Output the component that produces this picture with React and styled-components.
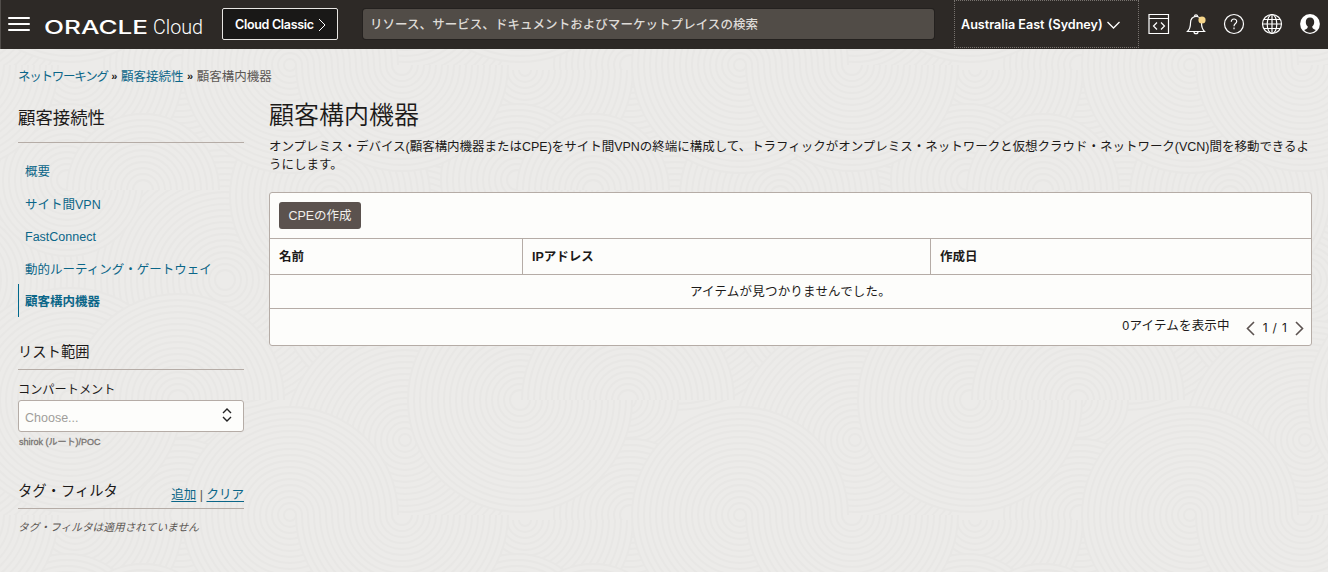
import React from 'react';
import styled, { createGlobalStyle, css } from 'styled-components';

const COLOR = {
  HEADER: '#2d2926',
  PAGE: '#ecebe9',
  RIPPLE: '#e8e7e5',
  TEXT: '#1c1a19',
  MUTED: '#5c5855',
  LINK: '#0b6688',
  LINE: '#b5aca6',
  PANEL: '#fdfdfb',
};

const FONT = {
  BASE: "'Liberation Sans', 'Noto Sans CJK JP', sans-serif",
  HEADER: "Inter, 'Noto Sans CJK JP', sans-serif",
};

const NAV_ITEMS = [
  '概要',
  'サイト間VPN',
  'FastConnect',
  '動的ルーティング・ゲートウェイ',
  '顧客構内機器',
];

const COLUMNS = ['名前', 'IPアドレス', '作成日'];

// discs overlap in this order, half discs join two centres into an S curve
const TILE = 450;
const DISCS = [
  { x: 225, y: 330, r: 130 },
  { x: 405, y: 330, r: 130 },
  { x: 330, y: 246, r: 100 },
  { x: 178, y: 0, r: 50 },
  { x: 405, y: 40, r: 120 },
  { x: 180, y: 115, r: 76 },
  { x: 75, y: 120, r: 108, half: 'bottom' },
  { x: 67, y: 230, r: 76 },
  { x: 143, y: 240, r: 76, half: 'top' },
  { x: 290, y: 115, r: 108 },
  { x: 402, y: 115, r: 106, half: 'bottom' },
  { x: 70, y: 0, r: 112 },
  { x: 178, y: 0, r: 106, half: 'top' },
];
const WRAPS = [-TILE, 0, TILE];
const RING_GAP = 6;

const ringPath = (x, y, r, half) => {
  const start = `M${x - r} ${y}`;
  const top = `a${r} ${r} 0 0 1 ${2 * r} 0`;
  const bottom = `a${r} ${r} 0 0 0 ${2 * r} 0`;

  if (half === 'top') return start + top;
  if (half === 'bottom') return start + bottom;
  return start + top + start + bottom;
};

const GlobalStyle = createGlobalStyle`
  * {
    box-sizing: border-box;
  }

  body {
    margin: 0;
    background: ${COLOR.PAGE};
  }
`;

const Page = styled.div`
  position: relative;
  height: 572px;
  overflow: hidden;
  font-family: ${FONT.BASE};
  font-size: 12.5px;
  line-height: 18px;
  color: ${COLOR.TEXT};
`;

const Backdrop = styled.svg`
  position: absolute;
  inset: 0;
  width: 100%;
  height: 100%;
`;

const Content = styled.div`
  position: relative;
`;

const HeaderBar = styled.header`
  display: flex;
  align-items: center;
  height: 49px;
  padding-left: 7px;
  border-left: 1px solid #514d4a;
  background: ${COLOR.HEADER};
  color: #fff;
  font-family: ${FONT.HEADER};
`;

const MenuButton = styled.div`
  display: flex;
  flex-direction: column;
  gap: 4px;
  width: 22px;
  margin-right: 15px;
  padding-bottom: 2px;

  span {
    height: 2px;
    border-radius: 1px;
    background: #fff;
  }
`;

const Logo = styled.svg`
  display: block;
  width: 162px;
  height: 48px;
  overflow: visible;
  fill: #fff;
`;

const ClassicButton = styled.div`
  display: flex;
  align-items: center;
  justify-content: space-between;
  width: 116px;
  height: 32px;
  margin: 0 25px 1px 15px;
  padding: 1px 11px 0 12px;
  border: 1px solid #e8e6e3;
  border-radius: 2px;
  background: #191817;
  font-size: 12.5px;
  font-weight: 600;
  letter-spacing: -0.3px;
  white-space: nowrap;
`;

const Search = styled.div`
  width: 571px;
  height: 30px;
  margin-bottom: 1px;
  padding: 1px 0 0 7px;
  border-radius: 3px;
  background: #514c47;
  box-shadow: 0 0 0 1px #24211f;
  color: #dedbd7;
  font-family: ${FONT.BASE};
  font-weight: 500;
  letter-spacing: 0.05px;
  line-height: 30px;
`;

const Region = styled.div`
  display: flex;
  align-items: center;
  gap: 4px;
  width: 185px;
  height: 48px;
  margin: 0 8.5px 1px 20px;
  padding: 1px 0 0 6px;
  border: 1px dotted #77726e;
  font-size: 12.6px;
  font-weight: 600;
  white-space: nowrap;
`;

const HeaderIcons = styled.div`
  display: flex;
  gap: 15.8px;
  padding-bottom: 2px;
`;

const Icon = styled.svg`
  display: block;
  flex: none;
  width: ${({ $w = 22 }) => $w}px;
  height: ${({ $h = 22 }) => $h}px;
  fill: none;
  stroke: ${({ $color = '#fff' }) => $color};
  stroke-width: ${({ $stroke = 1.2 }) => $stroke};
`;

const Breadcrumb = styled.nav`
  display: flex;
  gap: 3.6px;
  height: 18px;
  margin: 19px 0 0 18px;
  color: ${COLOR.MUTED};

  b {
    color: ${COLOR.TEXT};
    font-size: 11px;
    line-height: 17px;
  }
`;

const Crumb = styled.a`
  color: ${COLOR.LINK};
  letter-spacing: ${({ $tight }) => ($tight ? '-1.25px' : 'normal')};
`;

const Body = styled.div`
  display: flex;
  gap: 25px;
  padding: 0 16px 0 18px;
`;

const Sidebar = styled.aside`
  flex: none;
  width: 226px;
`;

const SideTitle = styled.h2`
  height: 57px;
  margin: 0;
  padding-top: 20px;
  border-bottom: 1px solid ${COLOR.LINE};
  font-size: 17.4px;
  font-weight: 400;
  line-height: 24px;
`;

const Nav = styled.nav`
  padding-top: 11px;
`;

const NavItem = styled.a`
  display: block;
  height: 32.5px;
  padding: 2px 0 0 6px;
  border-left: 1px solid transparent;
  color: ${COLOR.LINK};
  line-height: 33px;

  ${({ $active }) =>
    $active &&
    css`
      border-color: #00688c;
      font-weight: 700;
    `}
`;

const SectionTitle = styled.h3`
  display: flex;
  justify-content: space-between;
  height: 28px;
  margin: 0;
  border-bottom: 1px solid ${COLOR.LINE};
  font-size: 14.3px;
  font-weight: 400;
  line-height: 20px;
`;

const ListScope = styled.section`
  padding-top: 25px;
`;

const Label = styled.div`
  margin-top: 10px;
  font-size: 12.2px;
  line-height: 20px;
`;

const Select = styled.div`
  display: flex;
  align-items: center;
  justify-content: space-between;
  height: 32px;
  padding: 4px 11px 0 6px;
  border: 1px solid ${COLOR.LINE};
  border-radius: 3px;
  background: ${COLOR.PANEL};
  color: #a09d9a;

  svg {
    margin-bottom: 6px;
  }
`;

const Path = styled.div`
  padding: 1px 0 0 1px;
  color: #777370;
  font-size: 9px;
  line-height: 18px;
  -webkit-text-stroke: 0.3px #777370;
`;

const TagFilter = styled.section`
  padding-top: 30px;
`;

const TagLinks = styled.div`
  padding-top: 4px;
  color: ${COLOR.MUTED};
  font-size: 12.5px;

  a {
    color: ${COLOR.LINK};
    text-decoration: underline;
    text-underline-offset: 2px;
  }
`;

const TagNote = styled.div`
  padding-top: 9px;
  color: ${COLOR.MUTED};
  font-size: 10.7px;
  font-style: italic;
`;

const Main = styled.main`
  flex: 1;
`;

const Title = styled.h1`
  margin: 13px 0 7px;
  font-size: 25px;
  font-weight: 350;
  line-height: 32px;
`;

const Description = styled.p`
  height: 36px;
  margin: 0 0 18px;
  letter-spacing: -0.02px;
`;

const Panel = styled.div`
  border: 1px solid ${COLOR.LINE};
  border-radius: 3px;
  background: ${COLOR.PANEL};
`;

const Toolbar = styled.div`
  height: 46px;
  padding: 9px;
  border-bottom: 1px solid ${COLOR.LINE};
`;

const CreateButton = styled.button`
  display: block;
  width: 82px;
  height: 27px;
  padding: 0;
  border: 0;
  border-radius: 3px;
  background: #5b524e;
  color: #f1efec;
  font: inherit;
`;

const HeadRow = styled.div`
  display: grid;
  grid-template-columns: 253px 408px 1fr;
  height: 36px;
  border-bottom: 1px solid ${COLOR.LINE};
`;

const HeadCell = styled.div`
  height: 35px;
  padding: 1px 0 0 9px;
  border-right: 1px solid ${COLOR.LINE};
  font-weight: 700;
  line-height: 35px;

  &:last-child {
    border-right: 0;
  }
`;

const EmptyRow = styled.div`
  height: 34px;
  padding-top: 1px;
  border-bottom: 1px solid ${COLOR.LINE};
  letter-spacing: 0.2px;
  line-height: 33px;
  text-align: center;
`;

const Footer = styled.div`
  display: flex;
  justify-content: flex-end;
  height: 36px;
  padding-right: 7px;
  letter-spacing: 0.2px;
  line-height: 34px;
`;

const Pager = styled.div`
  display: flex;
  align-items: center;
  gap: 8px;
  margin-left: 16px;
  padding-top: 2px;
  font-family: ${FONT.HEADER};
  font-size: 12px;
  word-spacing: 1.2px;
`;

const Ripples = () => (
  <Backdrop aria-hidden="true">
    <defs>
      <pattern
        id="ripples"
        width={TILE}
        height={TILE}
        y="-50"
        patternUnits="userSpaceOnUse"
      >
        <rect width={TILE} height={TILE} fill={COLOR.PAGE} />
        {DISCS.map(({ x, y, r, half }, index) =>
          WRAPS.map((dx) =>
            WRAPS.map((dy) => (
              <g
                key={`${index}-${dx}-${dy}`}
                fill={COLOR.PAGE}
                stroke={COLOR.RIPPLE}
                strokeWidth="1.8"
              >
                {Array.from({ length: Math.floor(r / RING_GAP) }, (_, i) => (
                  <path
                    key={i}
                    d={ringPath(x + dx, y + dy, r - i * RING_GAP, half)}
                  />
                ))}
              </g>
            ))
          )
        )}
      </pattern>
    </defs>
    <rect width="100%" height="100%" fill="url(#ripples)" />
  </Backdrop>
);

const Header = () => (
  <HeaderBar>
    <MenuButton>
      <span />
      <span />
      <span />
    </MenuButton>
    <Logo viewBox="0 0 162 48">
      <text
        x="-1"
        y="32.8"
        fontFamily="Inter, sans-serif"
        fontSize="18.5"
        fontWeight="500"
        textLength="104"
        lengthAdjust="spacingAndGlyphs"
      >
        ORACLE
      </text>
      <text
        x="108"
        y="33"
        fontFamily="Roboto, sans-serif"
        fontSize="20"
        fontWeight="300"
        textLength="50"
        lengthAdjust="spacingAndGlyphs"
      >
        Cloud
      </text>
    </Logo>
    <ClassicButton>
      Cloud Classic
      <Icon viewBox="0 0 8 14" $w={8} $h={14} $stroke={1}>
        <path d="M1 1l6 6-6 6" />
      </Icon>
    </ClassicButton>
    <Search>リソース、サービス、ドキュメントおよびマーケットプレイスの検索</Search>
    <Region>
      Australia East (Sydney)
      <Icon viewBox="0 0 13 8" $w={13} $h={8} $stroke={1.3}>
        <path d="M.5 1l6 6 6-6" />
      </Icon>
    </Region>
    <HeaderIcons>
      <Icon viewBox="0 0 22 22">
        <path d="M1 1.5h19.5v19H1zM1 5.5h19.5" />
        <path d="M9 9.5l-3.5 3.5 3.5 3.5M13 9.5l3.5 3.5-3.5 3.5" />
      </Icon>
      <Icon viewBox="0 0 22 22">
        <path d="M2.500 18.500c2.500-2.500 3-4 3-8.500 0-4 2-6.500 5.500-6.500s5.500 2.500 5.500 6.500c0 4.500.5 6 3 8.500zM9.500 3.300a1.500 1.500 0 0 1 3 0M9 18.700a2 2 0 0 0 4 0" />
        <circle cx="17" cy="7" r="3.6" fill="#f6d58a" stroke="none" />
      </Icon>
      <Icon viewBox="0 0 22 22">
        <circle cx="11" cy="11" r="9.5" />
        <path d="M8.3 8.8c0-3.7 5.4-3.6 5.4-.3 0 2-2.7 2.2-2.7 4.7M11 14.5v1.7" />
      </Icon>
      <Icon viewBox="0 0 22 22">
        <circle cx="11" cy="11" r="9.5" />
        <ellipse cx="11" cy="11" rx="4.8" ry="9.5" />
        <path d="M11 1.5v19M1.5 11h19M3 6.5h16M3 15.5h16" />
      </Icon>
      <Icon viewBox="0 0 22 22">
        <circle cx="11" cy="11" r="9.9" fill="#fff" stroke="none" />
        <path
          d="M11 4.5c-2.8 0-4.2 2-4.2 4.5 0 2 .8 3.5 2 4.5 0 1.6-.8 2.4-3.6 3.5 1.6 1.8 3.5 2.7 5.8 2.7s4.2-.9 5.8-2.7c-2.8-1.1-3.6-1.9-3.6-3.5 1.2-1 2-2.5 2-4.5 0-2.5-1.4-4.5-4.2-4.5z"
          fill={COLOR.HEADER}
          stroke="none"
        />
      </Icon>
    </HeaderIcons>
  </HeaderBar>
);

const Side = () => (
  <Sidebar>
    <SideTitle>顧客接続性</SideTitle>
    <Nav>
      {NAV_ITEMS.map((item) => (
        <NavItem key={item} $active={item === '顧客構内機器'}>
          {item}
        </NavItem>
      ))}
    </Nav>
    <ListScope>
      <SectionTitle>リスト範囲</SectionTitle>
      <Label>コンパートメント</Label>
      <Select>
        Choose...
        <Icon viewBox="0 0 10 14" $w={10} $h={14} $color="#222" $stroke={1.4}>
          <path d="M1 5l4-4 4 4M1 9l4 4 4-4" />
        </Icon>
      </Select>
      <Path>shirok (ルート)/POC</Path>
    </ListScope>
    <TagFilter>
      <SectionTitle>
        タグ・フィルタ
        <TagLinks>
          <a>追加</a> | <a>クリア</a>
        </TagLinks>
      </SectionTitle>
      <TagNote>タグ・フィルタは適用されていません</TagNote>
    </TagFilter>
  </Sidebar>
);

const EquipmentTable = () => (
  <Panel>
    <Toolbar>
      <CreateButton>CPEの作成</CreateButton>
    </Toolbar>
    <HeadRow>
      {COLUMNS.map((column) => (
        <HeadCell key={column}>{column}</HeadCell>
      ))}
    </HeadRow>
    <EmptyRow>アイテムが見つかりませんでした。</EmptyRow>
    <Footer>
      0アイテムを表示中
      <Pager>
        <Icon viewBox="0 0 9 15" $w={9} $h={15} $color="#5c5350" $stroke={1.6}>
          <path d="M8 1L1.5 7.5 8 14" />
        </Icon>
        1 / 1
        <Icon viewBox="0 0 9 15" $w={9} $h={15} $color="#5c5350" $stroke={1.6}>
          <path d="M1 1l6.5 6.5L1 14" />
        </Icon>
      </Pager>
    </Footer>
  </Panel>
);

const App = () => (
  <Page>
    <GlobalStyle />
    <Ripples />
    <Content>
      <Header />
      <Breadcrumb>
        <Crumb $tight>ネットワーキング</Crumb>
        <b>»</b>
        <Crumb>顧客接続性</Crumb>
        <b>»</b>
        <span>顧客構内機器</span>
      </Breadcrumb>
      <Body>
        <Side />
        <Main>
          <Title>顧客構内機器</Title>
          <Description>
            オンプレミス・デバイス(顧客構内機器またはCPE)をサイト間VPNの終端に構成して、トラフィックがオンプレミス・ネットワークと仮想クラウド・ネットワーク(VCN)間を移動できるようにします。
          </Description>
          <EquipmentTable />
        </Main>
      </Body>
    </Content>
  </Page>
);

export default App;
